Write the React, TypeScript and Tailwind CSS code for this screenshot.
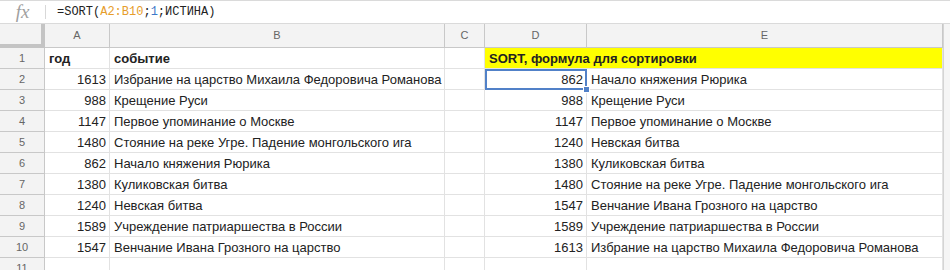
const left: [string, string][] = [
  ['1613', 'Избрание на царство Михаила Федоровича Романова'],
  ['988', 'Крещение Руси'],
  ['1147', 'Первое упоминание о Москве'],
  ['1480', 'Стояние на реке Угре. Падение монгольского ига'],
  ['862', 'Начало княжения Рюрика'],
  ['1380', 'Куликовская битва'],
  ['1240', 'Невская битва'],
  ['1589', 'Учреждение патриаршества в России'],
  ['1547', 'Венчание Ивана Грозного на царство'],
];

const sorted = [...left].sort((a, b) => Number(a[0]) - Number(b[0]));

const cols = 'grid grid-cols-[45px_65px_335px_40px_102px_356px_7px]';
const cell = 'h-[21px] border-r border-b border-[#e2e2e2] flex items-end pb-[1px] text-[13px] leading-[16px] text-[#222] whitespace-nowrap';
const rowHead = 'h-[21px] bg-[#f3f3f3] border-r border-b border-[#c8c8c8] flex items-center justify-center text-[11px] text-[#666]';
const colHead = 'h-[24px] bg-[#f3f3f3] border-r border-b border-[#c8c8c8] flex items-center justify-center text-[11px] text-[#666]';
const gutter = 'bg-[#f5f5f5] border-l border-[#d4d4d4]';

export default function App() {
  return (
    <div className="w-[950px] h-[270px] overflow-hidden bg-white" style={{ fontFamily: '"Liberation Sans", Arial, sans-serif' }}>
      {/* строка формул */}
      <div className="h-[24px] border-t border-b border-[#dadada] flex items-center">
        <div className="w-[45px] flex items-center justify-center">
          <span className="text-[19px] italic text-[#a0a0a0] leading-none -mt-[2px]" style={{ fontFamily: '"Liberation Serif", serif' }}>
            fx
          </span>
        </div>
        <div className="w-px h-[14px] bg-[#d8d8d8]" />
        <div className="pl-[11px] text-[12px] text-[#222]" style={{ fontFamily: '"Liberation Mono", monospace' }}>
          =SORT(<span className="text-[#e69d2b]">A2:B10</span>;<span className="text-[#3c78c8]">1</span>;ИСТИНА)
        </div>
      </div>

      {/* заголовки столбцов */}
      <div className={cols}>
        <div className="h-[24px] bg-[#f3f3f3] border-r-4 border-b-4 border-[#c4c4c4]" />
        <div className={colHead}>A</div>
        <div className={colHead}>B</div>
        <div className={colHead}>C</div>
        <div className={`${colHead} bg-[#dddddd]`}>D</div>
        <div className={colHead}>E</div>
        <div className={gutter} />
      </div>

      {/* строка 1 */}
      <div className={cols}>
        <div className={rowHead}>1</div>
        <div className={`${cell} px-[4px] font-bold`}>год</div>
        <div className={`${cell} px-[4px] font-bold`}>событие</div>
        <div className={cell} />
        <div className={`${cell} col-span-2 bg-[#ffff00] px-[4px] font-bold`}>SORT, формула для сортировки</div>
        <div className={gutter} />
      </div>

      {left.map((row, i) => {
        const s = sorted[i];
        const active = i === 0;
        return (
          <div key={i} className={cols}>
            <div className={`${rowHead} ${active ? 'bg-[#dddddd]' : ''}`}>{i + 2}</div>
            <div className={`${cell} justify-end px-[3px]`}>{row[0]}</div>
            <div className={`${cell} px-[4px]`}>{row[1]}</div>
            <div className={cell} />
            {active ? (
              <div className="h-[21px] border-2 border-[#5181c8] flex items-end justify-end pb-0 pr-[2px] text-[13px] leading-[16px] text-[#222] relative">
                {s[0]}
                <div className="absolute z-10 -right-[5px] -bottom-[5px] w-[7px] h-[7px] bg-[#5181c8] border border-white" />
              </div>
            ) : (
              <div className={`${cell} justify-end px-[3px]`}>{s[0]}</div>
            )}
            <div className={`${cell} px-[4px]`}>{s[1]}</div>
            <div className={gutter} />
          </div>
        );
      })}

      {/* строка 11 */}
      <div className={cols}>
        <div className={rowHead}>11</div>
        <div className={cell} />
        <div className={cell} />
        <div className={cell} />
        <div className={cell} />
        <div className={cell} />
        <div className={gutter} />
      </div>
    </div>
  );
}
